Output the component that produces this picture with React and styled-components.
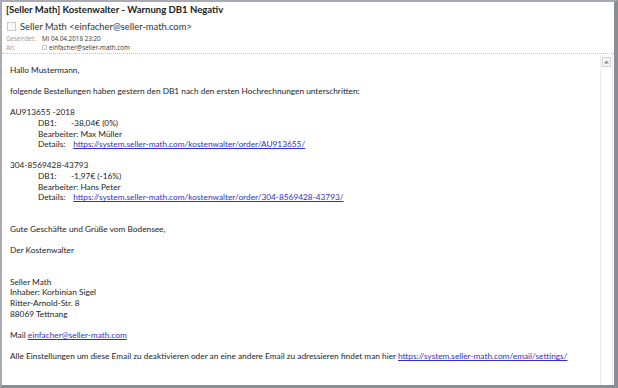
import React from "react";
import styled, { createGlobalStyle } from "styled-components";

const Global = createGlobalStyle`
  html, body { margin: 0; padding: 0; background: #ffffff; }
  body { width: 618px; height: 388px; overflow: hidden; }
`;

const Frame = styled.div`
  box-sizing: border-box;
  width: 618px;
  height: 388px;
  border-top: 2px solid #a9a9b1;
  border-left: 2px solid #a9a9b1;
  border-right: 4px solid #8c8c94;
  border-bottom: 3px solid #8c8c94;
  background: #fff;
  display: flex;
  flex-direction: column;
`;

const Header = styled.div`
  padding: 1px 0 0 4px;
  font-family: "Lato", "Open Sans", sans-serif;
  color: #222;
`;

const Subject = styled.div`
  font-weight: 700;
  font-size: 9.55px;
  line-height: 14px;
`;

const SenderRow = styled.div`
  display: flex;
  align-items: center;
  gap: 4px;
  margin: 2px 0 0 1px;
  height: 14px;
  font-size: 9.4px;
  color: #333;
`;

const Check = styled.span`
  box-sizing: border-box;
  display: inline-block;
  width: ${(p) => p.$size}px;
  height: ${(p) => p.$size}px;
  border: 1px solid #c8c8c8;
  background: #fafafa;
`;

const MetaRow = styled.div`
  display: flex;
  align-items: center;
  height: ${(p) => p.$h}px;
  font-family: "Open Sans", "Noto Sans", sans-serif;
  font-size: 6.3px;
`;

const MetaLabel = styled.span`
  width: 36px;
  color: #9a9a9a;
`;

const MetaValue = styled.span`
  display: flex;
  align-items: center;
  gap: 2px;
  color: #333;
`;

const Separator = styled.div`
  margin-top: 1px;
  border-bottom: 1px dotted #c4c4c4;
`;

const Main = styled.div`
  flex: 1;
  display: flex;
  min-height: 0;
`;

const Body = styled.div`
  flex: 1;
  padding: 11px 0 0 8px;
  font-family: "Lato", "Open Sans", sans-serif;
  font-size: 8.3px;
  line-height: 10.6px;
  color: #1e1e1e;
`;

const Line = styled.div`
  height: 10.6px;
  white-space: nowrap;
  padding-left: ${(p) => (p.$indent ? 28 : 0)}px;
  display: flex;
`;

const Key = styled.span`
  width: 33px;
  flex: none;
`;

const Link = styled.a`
  color: #3030c8;
  text-decoration: underline;
`;

const Scrollbar = styled.div`
  width: 11px;
  margin-right: 1px;
  border-left: 1px solid #ececec;
  border-right: 1px solid #ececec;
  padding-top: 3px;
  display: flex;
  flex-direction: column;
  align-items: center;
`;

const UpButton = styled.div`
  box-sizing: border-box;
  width: 9px;
  height: 10px;
  border: 1px solid #d4d4d4;
  background: #f4f4f4;
  display: flex;
  align-items: center;
  justify-content: center;
`;

const Blank = () => <Line />;

export default function App() {
  return (
    <>
      <Global />
      <Frame>
        <Header>
          <Subject>[Seller Math] Kostenwalter - Warnung DB1 Negativ</Subject>
          <SenderRow>
            <Check $size={9} />
            <span>Seller Math &lt;einfacher@seller-math.com&gt;</span>
          </SenderRow>
          <MetaRow $h={10}>
            <MetaLabel>Gesendet:</MetaLabel>
            <MetaValue>Mi 04.04.2018 23:20</MetaValue>
          </MetaRow>
          <MetaRow $h={9}>
            <MetaLabel>An:</MetaLabel>
            <MetaValue>
              <Check $size={5} />
              einfacher@seller-math.com
            </MetaValue>
          </MetaRow>
        </Header>
        <Separator />
        <Main>
          <Body>
            <Line>Hallo Mustermann,</Line>
            <Blank />
            <Line>folgende Bestellungen haben gestern den DB1 nach den ersten Hochrechnungen unterschritten:</Line>
            <Blank />
            <Line>AU913655 -2018</Line>
            <Line $indent><Key>DB1:</Key>-38,04€ (0%)</Line>
            <Line $indent>Bearbeiter: Max Müller</Line>
            <Line $indent><Key>Details:</Key>&nbsp;<Link href="#">https://system.seller-math.com/kostenwalter/order/AU913655/</Link></Line>
            <Blank />
            <Line>304-8569428-43793</Line>
            <Line $indent><Key>DB1:</Key>-1,97€ (-16%)</Line>
            <Line $indent>Bearbeiter: Hans Peter</Line>
            <Line $indent><Key>Details:</Key>&nbsp;<Link href="#">https://system.seller-math.com/kostenwalter/order/304-8569428-43793/</Link></Line>
            <Blank />
            <Blank />
            <Line>Gute Geschäfte und Grüße vom Bodensee,</Line>
            <Blank />
            <Line>Der Kostenwalter</Line>
            <Blank />
            <Blank />
            <Line>Seller Math</Line>
            <Line>Inhaber: Korbinian Sigel</Line>
            <Line>Ritter-Arnold-Str. 8</Line>
            <Line>88069 Tettnang</Line>
            <Blank />
            <Line>Mail&nbsp;<Link href="#">einfacher@seller-math.com</Link></Line>
            <Blank />
            <Line>Alle Einstellungen um diese Email zu deaktivieren oder an eine andere Email zu adressieren findet man hier&nbsp;<Link href="#">https://system.seller-math.com/email/settings/</Link></Line>
          </Body>
          <Scrollbar>
            <UpButton>
              <svg width="5" height="4" viewBox="0 0 5 4">
                <path d="M0 3.5 L2.5 0.5 L5 3.5 Z" fill="#8a8a8a" />
              </svg>
            </UpButton>
          </Scrollbar>
        </Main>
      </Frame>
    </>
  );
}
